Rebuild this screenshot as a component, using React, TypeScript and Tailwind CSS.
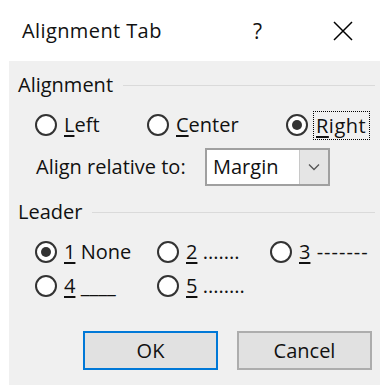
import React from 'react';

function Radio({ checked }: { checked?: boolean }) {
  return (
    <span className="flex h-[22px] w-[22px] shrink-0 items-center justify-center rounded-full border-2 border-[#333333] bg-white">
      {checked && <span className="h-[10px] w-[10px] rounded-full bg-[#333333]" />}
    </span>
  );
}

function Option({ checked, mnemonic, rest, className, restClass }: { checked?: boolean; mnemonic: string; rest: string; className?: string; restClass?: string }) {
  return (
    <label className={`flex items-center gap-[7px] ${className ?? ''}`}>
      <Radio checked={checked} />
      <span className="whitespace-pre">
        <u className="underline-offset-[3px]">{mnemonic}</u>
        <span className={restClass}>{rest}</span>
      </span>
    </label>
  );
}

function GroupLabel({ text }: { text: string }) {
  return (
    <div className="flex h-[24px] items-center gap-[10px] pr-[5px]">
      <span>{text}</span>
      <div className="h-px flex-1 bg-[#dadada]" />
    </div>
  );
}

export default function App() {
  return (
    <div className="h-[385px] w-[391px] overflow-hidden bg-white text-[20px] leading-[24px] text-[#111]" style={{ fontFamily: '"Open Sans", "Noto Sans", sans-serif' }}>
      {/* Title bar */}
      <div className="flex h-[61px] items-center pl-[22px]">
        <span className="w-[231px] tracking-[0.4px]">Alignment Tab</span>
        <span className="w-[80px] text-[21px]">?</span>
        <svg width="20" height="20" viewBox="0 0 20 20">
          <path d="M1 1 L19 19 M19 1 L1 19" stroke="#000" strokeWidth="1.5" />
        </svg>
      </div>

      {/* Body */}
      <div className="ml-[9px] h-[324px] w-[371px] bg-[#f0f0f0] pl-[9px] pt-[12px]">
        <GroupLabel text="Alignment" />

        <div className="mt-[16px] flex h-[24px] items-center pl-[17px]">
          <Option mnemonic="L" rest="eft" className="w-[112px]" />
          <Option mnemonic="C" rest="enter" className="w-[139px]" />
          <label className="flex items-center gap-[5px]">
            <Radio checked />
            <span className="w-[57px] border border-dotted border-black px-[2px] leading-[27px] tracking-[0.5px]">
              <u className="underline-offset-[3px]">R</u>ight
            </span>
          </label>
        </div>

        <div className="mt-[11px] flex h-[38px] items-center pl-[18px]">
          <span className="w-[169px]">Align relative to:</span>
          <div className="flex h-[38px] w-[125px] border-2 border-[#a0a0a0] bg-white">
            <span className="flex flex-1 items-center pl-[6px]">Margin</span>
            <span className="flex w-[29px] items-center justify-center border-l border-[#c8c8c8] bg-[#e5e5e5]">
              <svg width="12" height="8" viewBox="0 0 12 8">
                <path d="M1 1.5 L6 6.5 L11 1.5" fill="none" stroke="#555" strokeWidth="1.3" />
              </svg>
            </span>
          </div>
        </div>

        <div className="mt-[14px]">
          <GroupLabel text="Leader" />
        </div>

        <div className="mt-[16px] flex flex-col gap-[10px] pl-[17px]">
          <div className="flex h-[24px] items-center">
            <Option checked mnemonic="1" rest=" None" className="w-[122px]" />
            <Option mnemonic="2" rest=" ......." className="w-[113px]" />
            <Option mnemonic="3" rest=" -------" restClass="tracking-[1px]" />
          </div>
          <div className="flex h-[24px] items-center">
            <Option mnemonic="4" rest=" ____" className="w-[122px]" />
            <Option mnemonic="5" rest=" ........" />
          </div>
        </div>

        <div className="mt-[33px] flex gap-[19px] pl-[65px]">
          <button className="h-[39px] w-[135px] border-2 border-[#0078d7] bg-[#e1e1e1]">OK</button>
          <button className="h-[39px] w-[135px] border-2 border-[#adadad] bg-[#e1e1e1]">Cancel</button>
        </div>
      </div>
    </div>
  );
}
